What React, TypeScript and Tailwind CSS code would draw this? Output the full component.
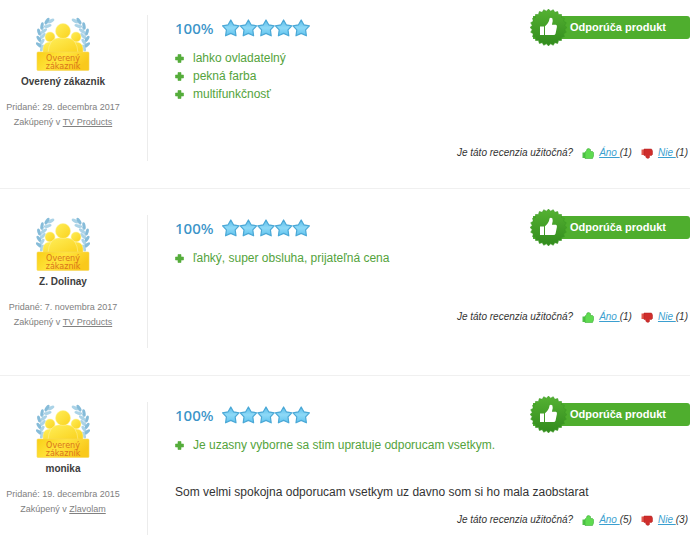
import React from "react";

type Review = {
  name: string;
  date: string;
  shop: string;
  pros: string[];
  text?: string;
  yes: number;
  no: number;
};

const reviews: Review[] = [
  {
    name: "Overený zákaznik",
    date: "29. decembra 2017",
    shop: "TV Products",
    pros: ["lahko ovladatelný", "pekná farba", "multifunkčnosť"],
    yes: 1,
    no: 1,
  },
  {
    name: "Z. Dolinay",
    date: "7. novembra 2017",
    shop: "TV Products",
    pros: ["ľahký, super obsluha, prijateľná cena"],
    yes: 1,
    no: 1,
  },
  {
    name: "monika",
    date: "19. decembra 2015",
    shop: "Zlavolam",
    pros: ["Je uzasny vyborne sa stim upratuje odporucam vsetkym."],
    text: "Som velmi spokojna odporucam vsetkym uz davno som si ho mala zaobstarat",
    yes: 5,
    no: 3,
  },
];

const leaves = [
  [15, 4, 60],
  [11, 4, 35],
  [12, 9, 70],
  [6, 9, 10],
  [8, 14, 50],
  [3, 15, -15],
  [7, 19, 40],
  [3, 22, -35],
  [6, 25, 35],
  [3, 28, -50],
  [6, 31, 20],
];

function Laurel() {
  return (
    <g>
      <path d="M15 3C6 9 2 19 6 34" fill="none" stroke="#9fc9df" strokeWidth="1" />
      {leaves.map(([x, y, r], i) => (
        <ellipse
          key={i}
          cx={x}
          cy={y}
          rx="1.6"
          ry="3.7"
          fill={i % 2 ? "#86bcd9" : "#abd3e7"}
          transform={`rotate(${r} ${x} ${y})`}
        />
      ))}
    </g>
  );
}

function VerifiedIcon() {
  return (
    <svg className="h-[54px] w-[54px]" viewBox="0 0 54 54" role="img" aria-label="Overený zákazník">
      <defs>
        <linearGradient id="gold" x1="0" y1="0" x2="1" y2="1">
          <stop offset="0" stopColor="#ffee58" />
          <stop offset="1" stopColor="#fad21e" />
        </linearGradient>
        <linearGradient id="plate" x1="0" y1="0" x2="1" y2="0.4">
          <stop offset="0" stopColor="#f9cf16" />
          <stop offset="0.5" stopColor="#ffe43c" />
          <stop offset="1" stopColor="#f9c91c" />
        </linearGradient>
      </defs>
      <Laurel />
      <g transform="translate(54 0) scale(-1 1)">
        <Laurel />
      </g>
      <g fill="url(#gold)" stroke="#fff3a0" strokeWidth="0.5">
        <circle cx="14" cy="20" r="5" />
        <circle cx="40" cy="20" r="5" />
        <path d="M7 36V31Q8 25 14 25Q18 25 20 28L34 28Q36 25 40 25Q46 25 47 31V36Z" />
        <path d="M12 36Q13 22 22 21H32Q41 22 42 36Z" />
        <circle cx="27" cy="14" r="7.5" />
      </g>
      <rect x="1" y="35" width="52" height="18.5" rx="1" fill="url(#plate)" stroke="#f6d65c" strokeWidth="0.6" />
      <g fill="#d9741c" fontFamily="'DejaVu Sans', Verdana, sans-serif" fontSize="8" textAnchor="middle">
        <text x="27" y="43.5">Overený</text>
        <text x="27" y="51.5">zákazník</text>
      </g>
    </svg>
  );
}

function Stars() {
  return (
    <svg className="h-[18px] w-[88px]" viewBox="0 0 88 18" role="img" aria-label="5 z 5 hviezdičiek">
      <defs>
        <linearGradient id="star" x1="0" y1="0" x2="0" y2="1">
          <stop offset="0" stopColor="#59bce9" />
          <stop offset="0.5" stopColor="#8ed9f7" />
          <stop offset="1" stopColor="#5fc3ee" />
        </linearGradient>
      </defs>
      {[0, 1, 2, 3, 4].map((i) => (
        <path
          key={i}
          transform={`translate(${i * 17.6} 0)`}
          d="M8.8 1L11.5 5.8L17 6.8L13.2 10.9L14 16.8L8.8 14.4L3.6 16.8L4.4 10.9L0.6 6.8L6.1 5.8Z"
          fill="url(#star)"
          stroke="#4ba8d6"
          strokeWidth="1.2"
          strokeLinejoin="round"
        />
      ))}
    </svg>
  );
}

const sealPoints = Array.from({ length: 48 }, (_, i) => {
  const radius = i % 2 ? 16.4 : 18.4;
  const angle = (i * Math.PI) / 24;
  return `${(18.5 + radius * Math.sin(angle)).toFixed(2)},${(18.5 - radius * Math.cos(angle)).toFixed(2)}`;
}).join(" ");

function Recommendation() {
  return (
    <div className="relative mt-px flex h-[23px] w-[157px] items-center rounded-r-[3px] bg-[#4fae2e] pl-[37px] text-[11px] font-bold text-white">
      <svg className="absolute -top-[7px] -left-[3px] h-[37px] w-[37px]" viewBox="0 0 37 37" aria-hidden="true">
        <defs>
          <linearGradient id="seal" x1="0" y1="0" x2="0" y2="1">
            <stop offset="0" stopColor="#55b232" />
            <stop offset="1" stopColor="#318a1d" />
          </linearGradient>
        </defs>
        <polygon points={sealPoints} fill="url(#seal)" stroke="#3d9a25" strokeWidth="0.6" strokeLinejoin="round" />
        <path d="M10 17.5H14V26H10Z" fill="#fff" />
        <path
          d="M15 17.3Q19 14 19.6 9.3Q21 8 22.4 9.6Q23.4 12 21.9 15.8H25.8Q27.4 16.2 26.9 18L25.6 24.5Q25.2 26 23.6 26H15Z"
          fill="#fff"
        />
      </svg>
      Odporúča produkt
    </div>
  );
}

function Plus() {
  return (
    <svg className="h-[9px] w-[9px] shrink-0" viewBox="0 0 9 9" aria-hidden="true">
      <path d="M3 0.5H6V3H8.5V6H6V8.5H3V6H0.5V3H3Z" fill="#55ad3b" stroke="#55ad3b" strokeWidth="0.6" strokeLinejoin="round" />
    </svg>
  );
}

function Thumb({ down = false }: { down?: boolean }) {
  return (
    <svg className="h-[11px] w-[12px]" viewBox="0 0 12 11" aria-hidden="true">
      {down ? (
        <g>
          <path d="M0.5 1.5H3V7H0.5Z" fill="#e2574c" />
          <path d="M3 1H10.5L11.5 3V6.5L10.5 7.5H8.5V9.5L7 10.5L5 9.5L4.5 7.5H3Z" fill="#cf2d2b" stroke="#b32222" strokeWidth="0.5" />
        </g>
      ) : (
        <g>
          <path d="M0.5 4.5H3V10H0.5Z" fill="#4fc248" />
          <path d="M3 4L4.5 3L5 1L6.8 0.5L8.5 1.5V3.5H10.5L11.5 4.5V8L10.5 10.5H3Z" fill="#5fdb50" stroke="#3fae3b" strokeWidth="0.6" />
        </g>
      )}
    </svg>
  );
}

function Votes({ yes, no }: { yes: number; no: number }) {
  return (
    <div className="flex items-center justify-end pr-[2px] text-[10px] leading-4 text-[#333] italic">
      <span className="mr-[9px]">Je táto recenzia užitočná?</span>
      <Thumb />
      <span className="mr-[9px] ml-[5px]">
        <a href="#ano" className="text-[#3b9fd0] underline">Áno </a>({yes})
      </span>
      <Thumb down />
      <span className="ml-[5px]">
        <a href="#nie" className="text-[#3b9fd0] underline">Nie </a>({no})
      </span>
    </div>
  );
}

function ReviewItem({ review }: { review: Review }) {
  return (
    <article className="flex border-b border-[#f0f0f0] pt-[26px] pb-[27px] first:pt-[15px] last:border-b-0">
      <div className="flex w-[148px] shrink-0 flex-col items-center border-r border-[#ececec] pt-[2px] pr-[21px] pb-[18px] text-center">
        <VerifiedIcon />
        <h2 className="mt-[3px] text-[10px] leading-4 font-bold text-[#3d3d3d]">{review.name}</h2>
        <p className="mt-[10px] text-[9px] leading-[15px] whitespace-nowrap text-[#808080]">
          Pridané: {review.date}
          <br />
          Zakúpený v <a href="#shop" className="underline">{review.shop}</a>
        </p>
      </div>
      <div className="min-w-0 flex-1 pl-[27px]">
        <div className="flex items-start justify-between">
          <div className="flex h-[26px] items-center gap-2">
            <span className="font-['Noto_Sans',sans-serif] text-[15px] font-medium text-[#3b94c8]">100%</span>
            <Stars />
          </div>
          <Recommendation />
        </div>
        <ul className="mt-2 text-[12px] leading-[18px] text-[#54a33c]">
          {review.pros.map((pro) => (
            <li key={pro} className="flex items-center gap-[9px]">
              <Plus />
              {pro}
            </li>
          ))}
        </ul>
        {review.text ? (
          <p className="mt-[29px] mb-[11px] text-[12px] leading-[18px] text-[#333]">{review.text}</p>
        ) : (
          <div className="h-[42px]" />
        )}
        <Votes yes={review.yes} no={review.no} />
      </div>
    </article>
  );
}

export default function App() {
  return (
    <main className="h-screen overflow-hidden bg-white pr-[10px] font-['Liberation_Sans',Arial,sans-serif]">
      {reviews.map((review) => (
        <ReviewItem key={review.name} review={review} />
      ))}
    </main>
  );
}
